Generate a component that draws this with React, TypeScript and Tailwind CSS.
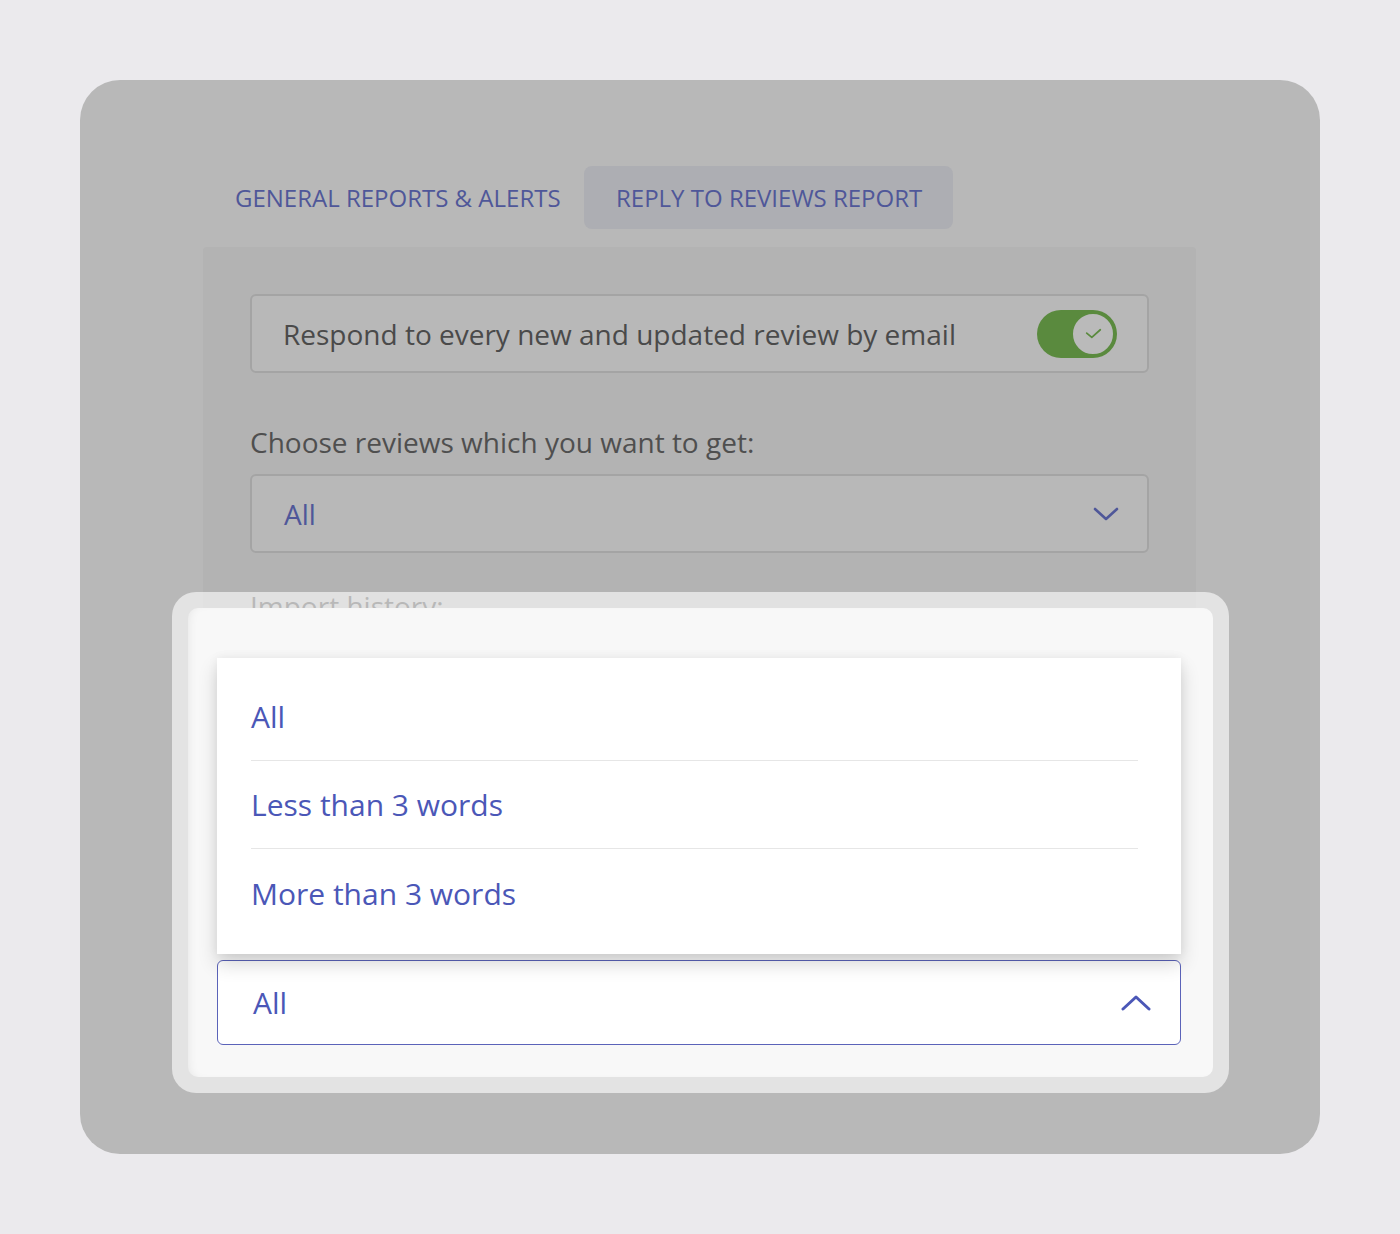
import React from 'react';

const font = { fontFamily: '"Open Sans", "Noto Sans", sans-serif' };

function ChevronDown({ className }: { className?: string }) {
  return (
    <svg viewBox="0 0 26 16" className={className} fill="none">
      <path d="M2 3l11 10L24 3" stroke="currentColor" strokeWidth="2.6" strokeLinecap="round" strokeLinejoin="round" />
    </svg>
  );
}

function ChevronUp({ className }: { className?: string }) {
  return (
    <svg viewBox="0 0 30 18" className={className} fill="none">
      <path d="M2 15L15 3l13 12" stroke="currentColor" strokeWidth="3" strokeLinecap="round" strokeLinejoin="round" />
    </svg>
  );
}

function Toggle() {
  return (
    <div className="relative w-[80px] h-[48px] rounded-full bg-[#5a8a3e]">
      <div className="absolute right-[1px] top-[1px] w-[46px] h-[46px] rounded-full bg-[#bababa] border-[3px] border-[#5a8a3e] flex items-center justify-center">
        <svg viewBox="0 0 20 14" className="w-[17px] h-[12px]" fill="none">
          <path d="M2 6l6 5 10-9" stroke="#5a8a3e" strokeWidth="2" strokeLinecap="round" strokeLinejoin="round" />
        </svg>
      </div>
    </div>
  );
}

const options = ['All', 'Less than 3 words', 'More than 3 words'];

export default function App() {
  return (
    <div className="w-[1400px] h-[1234px] bg-[#ebeaed] p-[80px]" style={font}>
      <div className="relative w-[1240px] h-[1074px] rounded-[40px] bg-[#b8b8b8] pt-[86px] pl-[123px]">
        {/* Tabs */}
        <div className="flex h-[63px]">
          <div className="w-[381px] pl-[32px] flex items-center whitespace-nowrap text-[24px] text-[#4f5799] uppercase">
            General Reports &amp; Alerts
          </div>
          <div className="w-[369px] pl-[32px] flex items-center whitespace-nowrap rounded-[8px] bg-[#adaeb3] text-[24px] text-[#4f5799] uppercase">
            Reply to Reviews Report
          </div>
        </div>

        {/* Panel */}
        <div className="mt-[18px] w-[993px] h-[830px] rounded-[4px] bg-[#b3b3b3] px-[47px] pt-[47px]">
          <div className="h-[79px] rounded-[6px] border-2 border-[#a4a4a4] bg-[#b8b8b8] pl-[31px] pr-[30px] flex items-center justify-between">
            <span className="text-[28px] text-[#4a4a4a] leading-[36px]">Respond to every new and updated review by email</span>
            <Toggle />
          </div>

          <div className="mt-[51px] text-[28px] leading-[36px] text-[#4f4f4f]">Choose reviews which you want to get:</div>

          <div className="mt-[14px] h-[79px] rounded-[6px] border-2 border-[#a4a4a4] bg-[#b8b8b8] pl-[32px] pr-[28px] flex items-center justify-between">
            <span className="text-[28px] text-[#4f5799]">All</span>
            <ChevronDown className="w-[26px] h-[16px] text-[#4f5799]" />
          </div>

          <div className="mt-[35px] text-[28px] leading-[36px] text-[#4f4f4f]">Import history:</div>
        </div>

        {/* Highlighted dropdown */}
        <div className="absolute left-[92px] top-[512px] w-[1057px] h-[501px] rounded-[24px] bg-white/60 p-[16px]">
          <div className="h-full rounded-[10px] bg-[#f8f8f8] pt-[50px] pl-[29px] pr-[32px] shadow-[inset_6px_0_12px_-8px_rgba(0,0,0,0.12)]">
            <div className="relative z-10 bg-white pt-[15px] pb-[17px] pl-[34px] pr-[43px] shadow-[0_10px_18px_rgba(0,0,0,0.16),0_0_10px_rgba(0,0,0,0.06)]">
              {options.map((o, i) => (
                <div
                  key={o}
                  className={`h-[88px] flex items-center text-[30px] text-[#4b57b7] ${i < options.length - 1 ? 'border-b border-[#e6e6e6]' : ''}`}
                >
                  {o}
                </div>
              ))}
            </div>
            <div className="mt-[6px] h-[85px] rounded-[6px] border border-[#5b63b9] bg-white pl-[35px] pr-[29px] flex items-center justify-between">
              <span className="text-[30px] text-[#4b57b7]">All</span>
              <ChevronUp className="w-[30px] h-[18px] text-[#4b57b7]" />
            </div>
          </div>
        </div>
      </div>
    </div>
  );
}
